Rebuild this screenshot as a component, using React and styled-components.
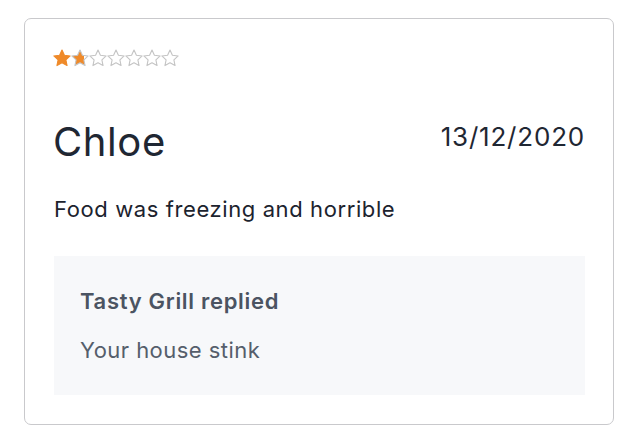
import React from "react";
import styled, { createGlobalStyle } from "styled-components";

const Global = createGlobalStyle`
  html, body { margin: 0; padding: 0; background: #ffffff; }
  body { font-family: Inter, "Noto Sans", "Liberation Sans", sans-serif; }
`;

const Page = styled.div`
  padding: 18px 20px 0 24px;
  width: 634px;
  box-sizing: border-box;
`;

const Card = styled.section`
  width: 590px;
  box-sizing: border-box;
  border: 1px solid #c9c9cc;
  border-radius: 7px;
  padding: 30px 28px 29px 28px;
  background: #fff;
`;

const Stars = styled.div`
  display: flex;
  gap: 0;
  height: 18px;
`;

const StarSvg = styled.svg`
  display: block;
  overflow: visible;
`;

const Header = styled.div`
  display: flex;
  justify-content: space-between;
  align-items: flex-start;
  margin-top: 51px;
`;

const Name = styled.h2`
  margin: 0;
  font-size: 40px;
  line-height: 48px;
  font-weight: 400;
  color: #1f2733;
  letter-spacing: 0.6px;
`;

const DateText = styled.span`
  margin-top: 3px;
  font-size: 26px;
  line-height: 31px;
  letter-spacing: 0.8px;
  color: #1f2733;
`;

const Body = styled.p`
  margin: 30px 0 0 1px;
  font-size: 22px;
  line-height: 26px;
  letter-spacing: 0.6px;
  color: #1c232e;
`;

const Reply = styled.div`
  margin-top: 34px;
  margin-left: 1px;
  background: #f7f8fa;
  padding: 32px 26px 32px;
`;

const ReplyTitle = styled.div`
  font-size: 22px;
  line-height: 26px;
  font-weight: 600;
  letter-spacing: 0.7px;
  color: #4b5462;
`;

const ReplyText = styled.div`
  margin-top: 23px;
  font-size: 22px;
  line-height: 26px;
  letter-spacing: 0.45px;
  color: #555e6b;
`;

const STAR =
  "M9 1 L11.41 6.28 L17.18 6.94 L12.9 10.87 L14.05 16.56 L9 13.7 L3.95 16.56 L5.1 10.87 L0.82 6.94 L6.59 6.28 Z";

function Star({ fill, id }) {
  const gid = `half-${id}`;
  return (
    <StarSvg width="18" height="18" viewBox="0 0 18 18">
      {fill === "half" && (
        <defs>
          <linearGradient id={gid} x1="0" x2="1" y1="0" y2="0">
            <stop offset="0.72" stopColor="#ef8a2a" />
            <stop offset="0.72" stopColor="#ffffff" />
          </linearGradient>
        </defs>
      )}
      <path
        d={STAR}
        fill={fill === "full" ? "#ef8a2a" : fill === "half" ? `url(#${gid})` : "#fff"}
        stroke={fill === "full" ? "#ef8a2a" : "#c4c4c4"}
        strokeWidth="1.1"
        strokeLinejoin="round"
      />
    </StarSvg>
  );
}

export default function App() {
  const stars = ["full", "half", "empty", "empty", "empty", "empty", "empty"];
  return (
    <>
      <Global />
      <Page>
        <Card>
          <Stars>
            {stars.map((s, i) => (
              <Star key={i} id={i} fill={s} />
            ))}
          </Stars>
          <Header>
            <Name>Chloe</Name>
            <DateText>13/12/2020</DateText>
          </Header>
          <Body>Food was freezing and horrible</Body>
          <Reply>
            <ReplyTitle>Tasty Grill replied</ReplyTitle>
            <ReplyText>Your house stink</ReplyText>
          </Reply>
        </Card>
      </Page>
    </>
  );
}
